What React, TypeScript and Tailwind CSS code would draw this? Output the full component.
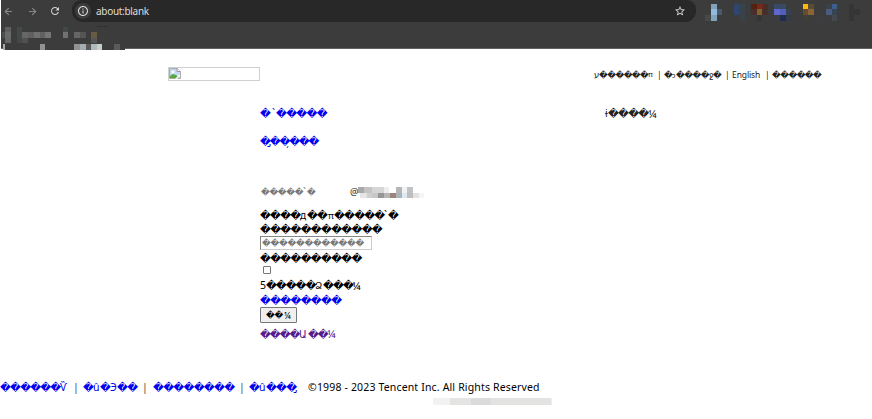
import React from "react";
import { ArrowLeft, ArrowRight } from "lucide-react";
import { MdRefresh, MdInfoOutline, MdStarOutline } from "react-icons/md";

type Cell = [number, number, number, number, string];

function Mosaic({ w, h, cells, className = "" }: { w: number; h: number; cells: Cell[]; className?: string }) {
  return (
    <svg width={w} height={h} viewBox={`0 0 ${w} ${h}`} shapeRendering="crispEdges" className={`block shrink-0 ${className}`}>
      {cells.map(([x, y, cw, ch, c], i) => (
        <rect key={i} x={x} y={y} width={cw} height={ch} fill={c} />
      ))}
    </svg>
  );
}

const extensions: Cell[] = [
  [11, 4, 6, 17, "#7fa3bd"], [17, 9, 5, 6, "#4c596c"], [5, 15, 6, 6, "#464948"], [11, 9, 6, 6, "#91bbdb"],
  [34, 4, 5, 11, "#2d4771"], [39, 4, 6, 5, "#39434a"], [39, 9, 6, 6, "#38414c"], [40, 15, 5, 6, "#394246"],
  [51, 4, 6, 5, "#54200f"], [57, 4, 6, 5, "#76281a"], [63, 4, 5, 5, "#472d2a"], [51, 9, 6, 6, "#482f2b"], [57, 9, 5, 6, "#85602f"], [62, 9, 6, 6, "#462f29"], [57, 15, 5, 6, "#353535"],
  [74, 4, 12, 5, "#394963"], [74, 9, 6, 6, "#6065d2"], [80, 9, 6, 6, "#535dbc"], [86, 9, 5, 6, "#384152"], [80, 15, 6, 6, "#202b50"], [86, 15, 5, 6, "#353b46"],
  [103, 4, 5, 5, "#fdb70b"], [108, 4, 6, 5, "#5a4b32"], [103, 9, 5, 6, "#654e30"], [108, 9, 6, 6, "#8c6335"], [103, 15, 5, 6, "#413e34"],
  [132, 4, 5, 5, "#3d608f"], [126, 9, 6, 6, "#475c7f"], [132, 9, 5, 6, "#364354"], [126, 4, 6, 5, "#394149"], [132, 15, 5, 6, "#42484e"], [121, 15, 5, 6, "#3b3d43"],
  [149, 4, 5, 17, "#353535"], [154, 9, 6, 6, "#353535"],
];

const bookmarks: Cell[] = [
  [5, 2, 6, 5, "#5f6161"], [2, 7, 3, 6, "#4a4f4e"], [5, 7, 6, 6, "#696b6b"], [5, 13, 6, 5, "#666"],
  [17, 2, 5, 16, "#434849"], [22, 7, 6, 6, "#666"], [28, 7, 6, 6, "#606060"], [34, 7, 6, 6, "#707070"], [40, 7, 5, 6, "#616161"], [45, 7, 6, 6, "#757575"], [22, 13, 6, 5, "#515151"],
  [63, 2, 5, 5, "#434848"], [63, 7, 5, 6, "#717171"], [74, 7, 6, 6, "#656565"], [80, 7, 6, 6, "#555"], [91, 7, 6, 6, "#695a44"], [91, 13, 6, 5, "#555"],
  [3, 19, 122, 6, "#3c3c3c"], [3, 19, 2, 6, "#aaa"], [40, 19, 5, 6, "#929292"], [74, 19, 6, 6, "#929292"], [80, 19, 6, 6, "#a6adb0"], [86, 19, 5, 6, "#595959"], [91, 19, 6, 6, "#aebabe"], [97, 19, 5, 6, "#c9cecd"], [114, 19, 6, 6, "#5a5a5a"], [97, 1, 11, 1, "#303030"],
];

const mailDomain: Cell[] = [
  [0, 0, 6, 6, "#aaa9a5"], [6, 0, 8, 6, "#c4c4c2"], [14, 0, 12, 6, "#d5d6d5"], [26, 0, 5, 6, "#eee"], [38, 0, 6, 6, "#b5b5b5"], [44, 0, 5, 6, "#f0f3f5"], [49, 0, 6, 6, "#c2c2c2"],
  [2, 6, 7, 5, "#e5e5e3"], [9, 6, 5, 5, "#cfcfcd"], [14, 6, 6, 5, "#c7c9c8"], [20, 6, 6, 5, "#969694"], [26, 6, 6, 5, "#b6b6b4"], [32, 6, 6, 5, "#99857a"], [38, 6, 6, 5, "#aeb2b4"], [44, 6, 5, 5, "#dce8f2"], [49, 6, 6, 5, "#bebebe"], [55, 6, 6, 5, "#e1e1e1"], [61, 6, 5, 5, "#f5f5f3"],
];

const license: Cell[] = [
  [0, 0, 17, 7, "#f2f2f2"], [17, 0, 21, 7, "#e4e4e3"], [38, 0, 20, 7, "#dbdbdb"], [58, 0, 60, 7, "#e3e3e2"], [118, 0, 1, 7, "#eee"],
];

/* Undecodable characters */
function Bad({ children, className = "tracking-[-0.7px]" }: { children: string; className?: string }) {
  return <span className={`inline-block shrink-0 font-['DejaVu_Sans',sans-serif] text-[10.6px] ${className}`}>{children}</span>;
}

function Small({ children, className = "tracking-[-0.5px]" }: { children: string; className?: string }) {
  return <span className={`inline-block shrink-0 font-['DejaVu_Sans',sans-serif] text-[8.5px] ${className}`}>{children}</span>;
}

/* A stray letter inside a run of undecodable characters */
function Ch({ children, className = "" }: { children: string; className?: string }) {
  return <span className={`inline-block shrink-0 font-['Noto_Sans','DejaVu_Sans',sans-serif] ${className}`}>{children}</span>;
}

function Row({ children, className = "" }: { children: React.ReactNode; className?: string }) {
  return <div className={`flex items-center whitespace-pre ${className}`}>{children}</div>;
}

function BrokenImage() {
  return (
    <div className="h-[14px] w-[92px] shrink-0 border border-[#d0d0d0]">
      <svg width="12" height="11" viewBox="0 0 12 11">
        <path d="M.5.5h8l3 3v7H.5z" fill="#c5d9f4" stroke="#a9a9a9" />
        <path d="M8 .5v3h3.5" fill="#fff" stroke="#999" />
        <circle cx="4" cy="4" r="1.5" fill="#fff" />
        <path d="M1 10V8l3-2 3 1 3 3z" fill="#58a83f" />
        <path d="M6 11l5-5v2l-3 3z" fill="#fff" />
      </svg>
    </div>
  );
}

export default function App() {
  return (
    <div className="h-[419px] w-[872px] overflow-hidden bg-white font-['Noto_Sans','DejaVu_Sans',sans-serif] text-[10.5px] leading-none text-black">
      <header className="ml-px h-[49px] border-b border-[#626062] bg-[#3c3c3c]">
        <div className="flex h-6 items-start">
          <div className="flex h-[22px] w-[71px] items-center pl-[2px] text-[#858585]">
            <ArrowLeft size={11} strokeWidth={2.4} />
            <ArrowRight size={11} strokeWidth={2.4} className="ml-[13px]" />
            <MdRefresh size={12} className="ml-[11px] text-[#d5d5d5]" />
          </div>
          <div className="flex h-[22px] w-[624px] items-center rounded-b-[11px] rounded-t-[9px] bg-[#282828] pl-[3px] pr-[10px] text-[#dedede]">
            <span className="flex size-4 items-center justify-center rounded-full bg-[#3c3c3c]">
              <MdInfoOutline size={12} />
            </span>
            <span className="ml-[5px] text-[10px] tracking-[-0.3px]">about:blank</span>
            <MdStarOutline size={12} className="ml-auto" />
          </div>
          <Mosaic w={170} h={22} cells={extensions} className="ml-[4px]" />
        </div>
        <Mosaic w={130} h={26} cells={bookmarks} className="-ml-px mt-px" />
      </header>

      <div className="flex h-[49px] pl-[168px] pt-[18px]">
        <BrokenImage />
        <Row className="ml-[334px] h-[16px] text-[8.5px] text-[#222]">
          <Ch className="w-[5px]">ע</Ch><Small className="w-[49px] tracking-[-0.5px]">������</Small><Ch className="w-[5px] text-[7.5px]">π</Ch>
          <span className="ml-[4px] w-[7px]">|</span>
          <Small className="w-[8px]">�</Small><Ch className="w-[4px] text-[7px]">ͻ</Ch><Small className="w-[33px] tracking-[-0.5px]">����</Small><Ch className="w-[4px]">ջ</Ch><Small className="w-[8px]">�</Small>
          <span className="ml-[4px] w-[7px]">|</span>
          <span className="w-[33px] tracking-[-0.1px]">English</span>
          <span className="w-[7px]">|</span>
          <Small>������</Small>
        </Row>
      </div>

      <main className="flex h-[278px] pl-[260px]">
        <section className="w-[345px]">
          <Row className="mt-[8px] h-[15px] text-[#00e]"><Bad className="w-[10px]">�</Bad><Ch className="w-[6px] pl-[2px]">ˋ</Ch><Bad>�����</Bad></Row>
          <Row className="mt-[13px] h-[14px] text-[#00e]"><Bad className="tracking-[-1.15px]">�̡��̦���</Bad></Row>
          <Row className="mt-[37px] h-[14px] text-[#777]">
            <span className="flex w-[90px] items-center pl-[1px]"><Small className="w-[42px] tracking-[-0.3px]">�����</Small><Ch className="w-[4px]">ˋ</Ch><Small>�</Small></span>
            <span className="w-[8px] text-[9.5px] text-[#222]">@</span>
            <Mosaic w={66} h={12} cells={mailDomain} className="mt-px" />
          </Row>
          <Row className="mt-[9px] h-[14px]"><Bad className="w-[40px] tracking-[-0.8px]">����</Bad><Ch className="w-[7px] text-[10px]">д</Ch><Bad className="w-[20px] tracking-[-0.8px]">��</Bad><Ch className="w-[7px] pl-px text-[9px]">π</Ch><Bad className="w-[50px] tracking-[-0.8px]">�����</Bad><Ch className="w-[4px]">ˋ</Ch><Bad>�</Bad></Row>
          <Row className="h-[14px]"><Bad>������������</Bad></Row>
          <input className="block h-[14px] w-[112px] border border-[#888] border-b-[#ccc] border-r-[#ccc] px-[1px] font-['DejaVu_Sans',sans-serif] text-[8.5px] leading-none tracking-[-0.21px] outline-none placeholder:text-[#777]" placeholder="������������" />
          <Row className="h-[16px]"><Bad>����������</Bad></Row>
          <input type="checkbox" className="ml-[3px] block size-2 appearance-none rounded-[1px] border border-[#777] bg-white" />
          <Row className="mt-[4px] h-[15px]"><Ch className="w-[6px]">5</Ch><Bad className="w-[49px] tracking-[-1px]">�����</Bad><Ch className="w-[8px] text-[9.5px]">Ձ</Ch><Bad className="w-[29px] tracking-[-0.9px]">���</Bad><Ch className="text-[11.5px]">¼</Ch></Row>
          <Row className="h-[14px] text-[#00e]"><Bad>��������</Bad></Row>
          <button className="flex h-4 w-[37px] items-center whitespace-pre rounded-[1px] border border-[#777] bg-[#efefef] pl-[4px] text-[9px]"><Small className="w-[19px] tracking-[-0.3px]">��</Small><Ch>¼</Ch></button>
          <Row className="mt-[4px] h-[14px] text-[#551a8b]"><Bad className="w-[39px] tracking-[-1px]">����</Bad><Ch className="w-[9px] text-[10px]">Ա</Ch><Bad className="w-[19px] tracking-[-1.1px]">��</Bad><Ch className="text-[11.5px]">¼</Ch></Row>
        </section>
        <Row className="mt-[8px] h-[15px] text-[#222]"><Ch className="w-[3px]">ɨ</Ch><Bad className="w-[40px] tracking-[-0.8px]">����</Bad><Ch className="text-[11.5px]">¼</Ch></Row>
      </main>

      <footer>
        <Row className="mt-[3px] h-[16px] text-[#00e]">
          <Bad className="w-[60px] tracking-[-0.8px]">������</Bad><Ch className="w-[9px]">Ѷ</Ch>
          <span className="w-[14px] pl-[4px] text-[#444]">|</span>
          <Bad className="w-[10px]">�</Bad><Ch className="w-[7px]">û</Ch><Bad className="w-[10px]">�</Bad><Ch className="w-[7px]">Э</Ch><Bad className="w-[21px] tracking-[-0.7px]">��</Bad>
          <span className="w-[15px] pl-[4px] text-[#444]">|</span>
          <Bad className="w-[82px] tracking-[-0.7px]">��������</Bad>
          <span className="w-[14px] pl-[4px] text-[#444]">|</span>
          <Bad className="w-[10px]">�</Bad><Ch className="w-[7px]">û</Ch><Bad className="w-[30px] tracking-[-0.8px]">���̡</Bad>
          <span className="ml-[12px] text-[10.5px] tracking-[0.16px] text-black">©1998 - 2023 Tencent Inc. All Rights Reserved</span>
        </Row>
        <Mosaic w={120} h={7} cells={license} className="ml-[433px] mt-[3px]" />
      </footer>
    </div>
  );
}
